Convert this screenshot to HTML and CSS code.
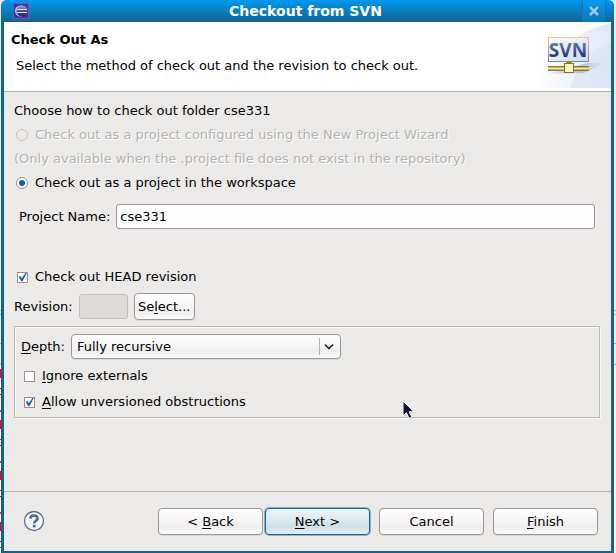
FILE: index.html
```html
<!DOCTYPE html>
<html lang="en">
<head>
  <meta charset="UTF-8">
  <meta name="viewport" content="width=device-width, initial-scale=1">
  <title>Checkout from SVN</title>
  <link rel="stylesheet" href="styles.css">
</head>
<body>

  <form class="dialog">
    <div class="titlebar">
      <svg class="app-icon" width="16" height="16" viewBox="0 0 16 16" aria-hidden="true">
        <defs>
          <linearGradient id="globe" x1="0" y1="0" x2="0" y2="1">
            <stop offset="0" stop-color="#a9a6d6"/>
            <stop offset="0.5" stop-color="#4a4892"/>
            <stop offset="1" stop-color="#28256c"/>
          </linearGradient>
        </defs>
        <rect x="0.5" y="0.5" width="15" height="15" fill="#44379c" stroke="#6259bb"/>
        <circle cx="7.5" cy="8" r="5.5" fill="#c9c0e4"/>
        <circle cx="9" cy="8" r="5.5" fill="url(#globe)"/>
        <path d="M4 6.5h10M4 9.5h10" stroke="#dfe6f8"/>
      </svg>
      <h1 class="title">Checkout from SVN</h1>
      <button type="button" class="close" aria-label="Close">
        <svg width="12" height="12" viewBox="0 0 12 12" aria-hidden="true">
          <path d="M2 2l8 8M10 2l-8 8" stroke="#1f6f9f" stroke-width="4.4"/>
          <path d="M2 2l8 8M10 2l-8 8" stroke="#8fcdf0" stroke-width="2.8"/>
        </svg>
      </button>
    </div>

    <div class="header">
      <div class="header-text">
        <h2 class="heading">Check Out As</h2>
        <p class="message">Select the method of check out and the revision to check out.</p>
      </div>
      <svg class="banner" width="77" height="66" viewBox="0 0 77 66" role="img" aria-label="SVN">
        <defs>
          <linearGradient id="swoosh" x1="0" y1="0" x2="1" y2="0">
            <stop offset="0" stop-color="#ffffff"/>
            <stop offset="0.5" stop-color="#eef2fb"/>
            <stop offset="1" stop-color="#e2e8f8"/>
          </linearGradient>
          <linearGradient id="frame" x1="0" y1="0" x2="0" y2="1">
            <stop offset="0" stop-color="#f3c283"/>
            <stop offset="1" stop-color="#6f8a9c"/>
          </linearGradient>
          <linearGradient id="panel" x1="0" y1="0" x2="1" y2="1">
            <stop offset="0" stop-color="#ffffff"/>
            <stop offset="1" stop-color="#ccd9ee"/>
          </linearGradient>
          <linearGradient id="letters" x1="0" y1="0" x2="0" y2="1">
            <stop offset="0" stop-color="#7f8db5"/>
            <stop offset="0.4" stop-color="#4f619a"/>
            <stop offset="0.8" stop-color="#1c2f70"/>
          </linearGradient>
          <linearGradient id="shade" x1="0" y1="0" x2="1" y2="0">
            <stop offset="0" stop-color="#c9c5d8" stop-opacity="0.2"/>
            <stop offset="0.6" stop-color="#bdbcd2"/>
            <stop offset="1" stop-color="#d5daee" stop-opacity="0.3"/>
          </linearGradient>
        </defs>
        <path d="M77 1C46 8 14 28 2 66h75z" fill="url(#swoosh)"/>
        <path d="M77 21C60 26 44 42 36 66h41z" fill="#d6dff5" opacity="0.5"/>
        <path d="M12 52L54 41L71 41L50 51z" fill="url(#shade)"/>
        <rect x="14.5" y="15.5" width="40" height="24" fill="url(#panel)" stroke="url(#frame)"/>
        <text class="banner-text" x="34" y="35" text-anchor="middle" fill="url(#letters)">SVN</text>
        <path d="M14 46.5h41" stroke="#8a7d21" stroke-width="5"/>
        <path d="M14 46.5h41" stroke="#f3edb0" stroke-width="2"/>
        <path d="M35 40v3" stroke="#8a7d21" stroke-width="5"/>
        <rect x="30.5" y="41.5" width="9" height="9" fill="#fdf0c4" stroke="#8a7415"/>
      </svg>
    </div>

    <div class="content">
      <fieldset class="method">
        <legend class="row">Choose how to check out folder cse331</legend>
        <label class="row option disabled">
          <input type="radio" class="radio" name="method" disabled>
          Check out as a project configured using the New Project Wizard
        </label>
        <p class="row disabled">(Only available when the .project file does not exist in the repository)</p>
        <label class="row option">
          <input type="radio" class="radio" name="method" checked>
          Check out as a project in the workspace
        </label>
      </fieldset>

      <div class="project">
        <label for="project-name">Project Name:</label>
        <input type="text" class="field" id="project-name" value="cse331">
      </div>

      <label class="row option">
        <input type="checkbox" class="check" checked>
        Check out HEAD revision
      </label>

      <div class="revision">
        <label for="revision">Revision:</label>
        <input type="text" class="field field-small" id="revision" disabled>
        <button type="button" class="button button-small">Se<u>l</u>ect...</button>
      </div>

      <div class="group">
        <div class="depth">
          <label for="depth"><u>D</u>epth:</label>
          <div class="combo">
            <select class="select" id="depth">
              <option>Fully recursive</option>
            </select>
            <svg class="arrow" width="21" height="17" viewBox="0 0 21 17" aria-hidden="true">
              <path d="M0.5 0v17" stroke="#b5b1ae"/>
              <path d="M6 6.5l4 4l4-4" fill="none" stroke="#222" stroke-width="1.6"/>
            </svg>
          </div>
        </div>
        <label class="option group-option">
          <input type="checkbox" class="check">
          <span><u>I</u>gnore externals</span>
        </label>
        <label class="option group-option">
          <input type="checkbox" class="check" checked>
          <span><u>A</u>llow unversioned obstructions</span>
        </label>
      </div>
    </div>

    <div class="footer">
      <button type="button" class="help" aria-label="Help">
        <svg width="22" height="22" viewBox="0 0 22 22" aria-hidden="true">
          <circle cx="11" cy="10" r="9.5" fill="#f4f6fa" stroke="#5a6f92" stroke-width="1.3"/>
          <path d="M7.4 7.6C7.6 3.6 14.6 3.6 14.6 7.4C14.6 9.8 11.2 9.6 11.2 12.4" fill="none" stroke="#54698f" stroke-width="2.6"/>
          <rect x="9.8" y="13.8" width="2.8" height="2.6" fill="#54698f"/>
        </svg>
      </button>
      <div class="steps">
        <button type="button" class="button">&lt; <u>B</u>ack</button>
        <button type="button" class="button button-default"><u>N</u>ext &gt;</button>
      </div>
      <button type="button" class="button">Cancel</button>
      <button type="button" class="button"><u>F</u>inish</button>
    </div>
  </form>

  <svg class="pointer" width="14" height="20" viewBox="0 0 14 20" aria-hidden="true">
    <path d="M2 2v15l3.4-3.2l2.6 5.6l2.8-1.4l-2.5-5.3h4.6z" fill="#999" opacity="0.5"/>
    <path d="M1 1v15l3.4-3.2l2.6 5.6l2.8-1.4l-2.5-5.3h4.6z" fill="#12143c" stroke="#fff"/>
  </svg>

</body>
</html>
```

FILE: styles.css
```css
* {
  box-sizing: border-box;
}

/* The window behind the dialog shows at both edges */
body {
  margin: 0;
  min-height: 100vh;
  padding: 0 2px 0 1px;
  display: flex;
  background:
    linear-gradient(#b0acaa, #b0acaa) 0 310px / 100% 1px no-repeat,
    linear-gradient(#b0acaa, #b0acaa) 0 314px / 100% 1px no-repeat,
    linear-gradient(#b0acaa, #b0acaa) 0 343px / 100% 1px no-repeat,
    linear-gradient(#b0acaa, #b0acaa) 0 364px / 100% 1px no-repeat,
    linear-gradient(#eeedeb, #eeedeb) 0 0 / 100% 364px no-repeat,
    repeating-linear-gradient(
      #ff0000 0 9px,
      #ffffff 9px 19px,
      #ff0000 19px 20px,
      #ffffff 20px 25px,
      #ff0000 25px 26px,
      #ffffff 26px 41px,
      #e04040 41px 43px,
      #ffffff 43px 51px
    ) 0 369px / 1px 100% no-repeat,
    #ffffff;
  color: #000000;
  font: 13px/16px "DejaVu Sans", Verdana, sans-serif;
}

h1, h2, p, fieldset, legend {
  margin: 0;
  padding: 0;
  border: 0;
}

button, input, select {
  font: inherit;
  color: inherit;
  margin: 0;
}

u {
  text-underline-offset: 2px;
}

.dialog {
  flex: 1;
  display: flex;
  flex-direction: column;
  border: 3px solid #13638f;
  border-width: 0 3px 2px;
  border-radius: 6px 6px 0 0;
  background-color: #ebeae8;
}

/* Title bar */
.titlebar {
  display: flex;
  align-items: center;
  height: 22px;
  margin: 0 -3px;
  padding: 0 8px 0 12px;
  border-radius: 6px 6px 0 0;
  background: linear-gradient(#0099f0, #13638f);
}

.title {
  flex: 1;
  font-size: 14px;
  text-align: center;
  color: #ffffff;
}

.close {
  display: flex;
  align-items: center;
  justify-content: center;
  width: 24px;
  height: 21px;
  padding: 0;
  border: 1px solid #0c78b9;
  border-top: 0;
  background: linear-gradient(#0a9af0, #0b76b6);
}

/* Header */
.header {
  display: flex;
  justify-content: space-between;
  height: 70px;
  border-bottom: 1px solid #b5b3b0;
  background-color: #ffffff;
}

.header-text {
  padding: 10px 0 0 7px;
}

.heading {
  font-size: 13px;
}

.message {
  padding: 10px 0 0 5px;
}

.banner-text {
  font: bold 19px "Open Sans", sans-serif;
}

/* Content */
.content {
  flex: 1;
  padding: 7px 11px 0 10px;
}

.row {
  display: flex;
  align-items: center;
  height: 24px;
}

.option {
  display: flex;
  align-items: center;
  gap: 7px;
}

.disabled {
  color: #b5b3b1;
  text-shadow: 1px 1px 0 #ffffff;
}

.radio,
.check {
  appearance: none;
  flex: none;
  display: grid;
  place-items: center;
  border: 1px solid #9a9290;
  background-color: #ffffff;
}

.radio {
  width: 12px;
  height: 12px;
  margin: 0 0 0 2px;
  border-radius: 50%;
}

.radio:checked::before {
  content: "";
  width: 6px;
  height: 6px;
  border-radius: 50%;
  background-color: #0a5fc4;
}

.radio:disabled {
  border-color: #c4c0be;
  background-color: transparent;
}

.check {
  width: 11px;
  height: 11px;
  margin: 0 0 0 3px;
}

.check:checked::before {
  content: "";
  width: 9px;
  height: 9px;
  background-color: #1464c8;
  clip-path: polygon(8% 48%, 28% 40%, 42% 64%, 86% 0, 100% 0, 50% 98%, 36% 98%);
}

.project {
  display: flex;
  align-items: center;
  gap: 6px;
  margin: 9px 5px 36px;
}

.field {
  flex: 1;
  height: 25px;
  padding: 0 3px;
  border: 1px solid #9a9290;
  border-radius: 3px;
  background-color: #ffffff;
}

.field-small {
  flex: none;
  width: 49px;
}

.field:disabled {
  border-color: #c4bfbd;
  background-color: #dedad9;
}

.revision {
  display: flex;
  align-items: center;
  gap: 6px;
  margin-top: 4px;
}

.button {
  width: 105px;
  height: 27px;
  padding: 0;
  border: 1px solid #9a9694;
  border-radius: 4px;
  background: linear-gradient(#ffffff, #f6f4f4 50%, #efedee 70%, #fbfbfb);
  box-shadow: 0 1px 1px #d8d6d4;
}

.button-small {
  width: 61px;
}

.button-default {
  border-color: #13638f;
  background: linear-gradient(#eef4f7, #dbe8ee 50%, #cfe0e8 70%, #e2edf2);
  box-shadow: 0 0 0 1px #8fb3c8;
}

/* Options group */
.group {
  margin-top: 6px;
  padding: 7px 6px 2px;
  border: 1px solid #bcbab7;
  box-shadow: 1px 1px 0 #f8f8f8, inset 1px 1px 0 #f8f8f8;
}

.depth {
  display: flex;
  align-items: center;
  gap: 6px;
  margin-bottom: 4px;
}

.combo {
  position: relative;
  width: 270px;
}

.select {
  appearance: none;
  display: block;
  width: 100%;
  height: 25px;
  padding: 0 26px 0 5px;
  border: 1px solid #9a9694;
  border-radius: 4px;
  background: linear-gradient(#ffffff, #f6f4f4 50%, #efedee 70%, #fbfbfb);
  box-shadow: 0 1px 1px #d8d6d4;
}

.arrow {
  position: absolute;
  top: 4px;
  right: 1px;
  pointer-events: none;
}

.group-option {
  height: 26px;
}

/* Footer */
.footer {
  display: flex;
  align-items: center;
  gap: 9px;
  height: 60px;
  padding: 0 13px 0 19px;
  border-top: 1px solid #b5b3b0;
}

.help {
  display: flex;
  margin-right: auto;
  padding: 0;
  border: 0;
  background: none;
}

.steps {
  display: flex;
  gap: 2px;
}

.pointer {
  position: absolute;
  left: 402px;
  top: 400px;
}
```
